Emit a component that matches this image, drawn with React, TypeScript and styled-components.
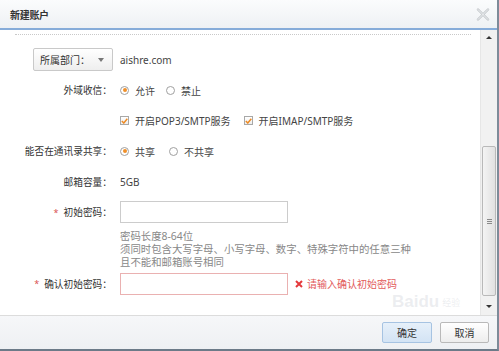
import styled, { createGlobalStyle } from "styled-components";

const GlobalStyle = createGlobalStyle`
body {
  margin: 0;
  font-family: "Noto Sans", "Noto Sans CJK SC", sans-serif;
  background: #ffffff;
}
`;

const Dialog = styled.div`
position: relative;
width: 499px;
height: 351px;
box-sizing: border-box;
display: flex;
flex-direction: column;
border-right: 2px solid #7d8b99;
border-bottom: 2px solid #6c7a88;
background: #ffffff;
overflow: hidden;
`;

const Header = styled.div`
height: 28px;
flex: none;
display: flex;
align-items: center;
justify-content: space-between;
padding: 0 7px 0 10px;
background: linear-gradient(#fbfcfd, #eef1f4);
border-bottom: 2px solid #86acd9;
`;

const Title = styled.div`
font-size: 10px;
font-weight: 700;
color: #333333;
letter-spacing: -0.3px;
`;

const Body = styled.div`
flex: 1;
display: flex;
min-height: 0;
`;

const Content = styled.div`
flex: 1;
padding-top: 4px;
`;

const Rule = styled.div`
margin: 0 9px 0 15px;
border-top: 1px dotted #c9c9c9;
`;

const Form = styled.div`
padding-top: 9.5px;
`;

const Row = styled.div`
height: 30.5px;
display: grid;
grid-template-columns: 112px 1fr;
column-gap: 8px;
align-items: center;
`;

const Label = styled.div`
display: flex;
justify-content: flex-end;
align-items: center;
font-size: 9.7px;
color: #333333;
white-space: nowrap;
`;

const Star = styled.span`
color: #d9534f;
margin-right: 5px;
font-size: 9px;
`;

const Value = styled.div`
display: flex;
align-items: center;
font-size: 10px;
color: #444444;
white-space: nowrap;
`;

const Select = styled.div`
width: 80px;
height: 23px;
box-sizing: border-box;
margin-right: -1px;
display: flex;
align-items: center;
justify-content: space-between;
padding: 0 8px 0 6px;
border: 1px solid #c9c9c9;
border-radius: 2px;
background: linear-gradient(#ffffff, #eeeeee);
font-size: 10px;
color: #333333;
`;

const Caret = styled.span`
width: 0;
height: 0;
border-left: 3px solid transparent;
border-right: 3px solid transparent;
border-top: 4px solid #777777;
`;

const Option = styled.label<{ $gap?: number }>`
display: flex;
align-items: center;
gap: 6px;
margin-right: ${p => p.$gap ?? 11}px;
`;

const Radio = styled.span<{ $on?: boolean }>`
width: 9px;
height: 9px;
box-sizing: border-box;
border: 1px solid #a0a0a0;
border-radius: 50%;
background: #ffffff;
display: flex;
align-items: center;
justify-content: center;
&::after {
  content: "";
  width: 4px;
  height: 4px;
  border-radius: 50%;
  background: ${p => (p.$on ? "#f0902a" : "transparent")};
}
`;

const Check = styled.span`
width: 9px;
height: 9px;
box-sizing: border-box;
border: 1px solid #a8a8a8;
background: linear-gradient(#ffffff, #eeeeee);
display: flex;
align-items: center;
justify-content: center;
`;

const Input = styled.div<{ $error?: boolean }>`
width: 168px;
height: 22px;
box-sizing: border-box;
border: 1px solid ${p => (p.$error ? "#eab1b1" : "#cccccc")};
background: #ffffff;
`;

const Hint = styled.div`
margin: 2px 0 0 120px;
font-size: 10.4px;
line-height: 13px;
color: #888888;
white-space: nowrap;
`;

const Error = styled.span`
display: flex;
align-items: center;
gap: 4px;
margin-left: 7px;
color: #e25a5a;
font-size: 10px;
`;

const Scrollbar = styled.div`
width: 17px;
flex: none;
display: flex;
flex-direction: column;
align-items: center;
background: #f1f1f1;
border-left: 1px solid #e6e6e6;
padding: 6px 0 7px;
box-sizing: border-box;
`;

const Arrow = styled.span<{ $down?: boolean }>`
width: 0;
height: 0;
border-left: 3px solid transparent;
border-right: 3px solid transparent;
${p => (p.$down ? "border-top: 3px solid #333;" : "border-bottom: 3px solid #333;")}
`;

const Track = styled.div`
flex: 1;
align-self: stretch;
display: flex;
flex-direction: column;
justify-content: flex-end;
padding: 0 1px 9px;
`;

const Thumb = styled.div`
height: 150px;
box-sizing: border-box;
border: 1px solid #b9b9b9;
border-radius: 2px;
background: linear-gradient(90deg, #f4f4f4, #e1e1e1);
display: flex;
flex-direction: column;
align-items: center;
justify-content: center;
gap: 1px;
`;

const Grip = styled.span`
width: 5px;
height: 1px;
background: #8a8a8a;
`;

const Footer = styled.div`
height: 33px;
flex: none;
display: flex;
align-items: center;
justify-content: flex-end;
gap: 8px;
padding-right: 8px;
border-top: 1px solid #dcdcdc;
background: linear-gradient(#f6f7f9, #eef0f3);
`;

const Button = styled.button<{ $primary?: boolean }>`
width: ${p => (p.$primary ? 50 : 49)}px;
height: 21px;
padding: 0;
font-family: inherit;
font-size: 10px;
color: #333333;
border: 1px solid ${p => (p.$primary ? "#a6c3e2" : "#b9b9b9")};
border-radius: 2px;
background: ${p => (p.$primary ? "linear-gradient(#e6f0fa, #d3e3f4)" : "linear-gradient(#ffffff, #ededed)")};
`;

const Watermark = styled.div`
position: absolute;
left: 392px;
top: 292px;
display: flex;
align-items: flex-end;
gap: 3px;
color: rgba(200, 205, 212, 0.35);
font-family: "Liberation Sans", sans-serif;
font-weight: 700;
font-size: 17px;
pointer-events: none;
`;

const WatermarkSmall = styled.span`
font-size: 9px;
font-weight: 400;
font-family: "Noto Sans CJK SC", sans-serif;
margin-bottom: 3px;
`;

const CloseIcon = () => (
  <svg width="14" height="13" viewBox="0 0 14 13">
    <path d="M2 1.5 L12 11.5 M12 1.5 L2 11.5" stroke="#bfc3c7" strokeWidth="2.4" strokeLinecap="round" />
    <path d="M2 1.5 L12 11.5 M12 1.5 L2 11.5" stroke="#f4f6f8" strokeWidth="1" strokeLinecap="round" />
  </svg>
);

const Tick = () => (
  <svg width="7" height="6" viewBox="0 0 7 6">
    <path d="M0.8 3 L2.8 5 L6.3 0.8" stroke="#ee8a22" strokeWidth="1.5" fill="none" />
  </svg>
);

const Cross = () => (
  <svg width="8" height="8" viewBox="0 0 8 8">
    <path d="M1 1 L7 7 M7 1 L1 7" stroke="#e4393c" strokeWidth="2" />
  </svg>
);

const App = () => {
  return (
    <>
      <GlobalStyle />
      <Dialog>
        <Header>
          <Title>新建账户</Title>
          <CloseIcon />
        </Header>
        <Body>
          <Content>
            <Rule />
            <Form>
              <Row>
                <Label>
                  <Select>
                    所属部门：
                    <Caret />
                  </Select>
                </Label>
                <Value>aishre.com</Value>
              </Row>
              <Row>
                <Label>外域收信：</Label>
                <Value>
                  <Option><Radio $on />允许</Option>
                  <Option><Radio />禁止</Option>
                </Value>
              </Row>
              <Row>
                <Label />
                <Value>
                  <Option $gap={13}><Check><Tick /></Check>开启POP3/SMTP服务</Option>
                  <Option><Check><Tick /></Check>开启IMAP/SMTP服务</Option>
                </Value>
              </Row>
              <Row>
                <Label>能否在通讯录共享：</Label>
                <Value>
                  <Option $gap={14}><Radio $on />共享</Option>
                  <Option><Radio />不共享</Option>
                </Value>
              </Row>
              <Row>
                <Label>邮箱容量：</Label>
                <Value>5GB</Value>
              </Row>
              <Row>
                <Label><Star>*</Star>初始密码：</Label>
                <Value><Input /></Value>
              </Row>
              <Hint>
                密码长度8-64位<br />
                须同时包含大写字母、小写字母、数字、特殊字符中的任意三种<br />
                且不能和邮箱账号相同
              </Hint>
              <Row>
                <Label><Star>*</Star>确认初始密码：</Label>
                <Value>
                  <Input $error />
                  <Error><Cross />请输入确认初始密码</Error>
                </Value>
              </Row>
            </Form>
          </Content>
          <Scrollbar>
            <Arrow />
            <Track>
              <Thumb>
                <Grip />
                <Grip />
                <Grip />
              </Thumb>
            </Track>
            <Arrow $down />
          </Scrollbar>
        </Body>
        <Footer>
          <Button $primary>确定</Button>
          <Button>取消</Button>
        </Footer>
        <Watermark>
          Baidu<WatermarkSmall>经验</WatermarkSmall>
        </Watermark>
      </Dialog>
    </>
  );
};

export default App;
